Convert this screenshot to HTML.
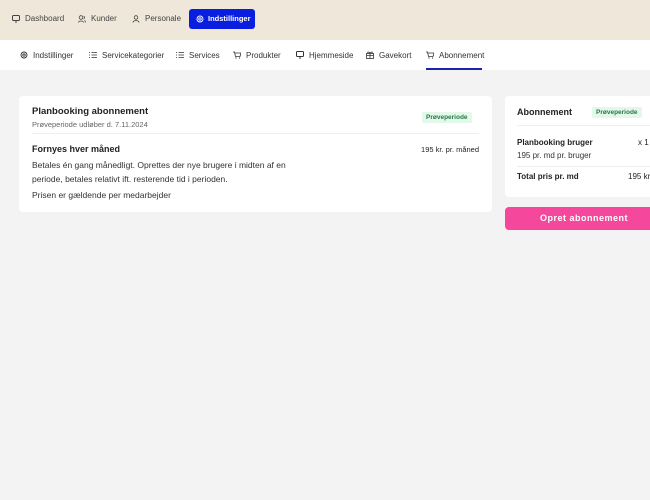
<!DOCTYPE html>
<html><head><style>
*{box-sizing:border-box;margin:0;padding:0}
body{width:650px;height:500px;overflow:hidden;background:#f3f3f3;font-family:"Liberation Sans",sans-serif;color:#222;position:relative}
.top{position:absolute;left:0;top:0;width:650px;height:40px;background:#efe8da}
.top .it{position:absolute;top:9px;height:20px;font-size:8px;line-height:20px;color:#444;display:flex;align-items:center;gap:5px}
.top .act{background:#0a1ee0;color:#fff;border-radius:3px;font-weight:bold;font-size:7.5px;gap:4px}
.nav{position:absolute;left:0;top:40px;width:650px;height:30px;background:#fff}
.nav .it{position:absolute;top:0;height:30px;line-height:29px;font-size:8px;color:#333;display:flex;align-items:center;gap:5px}
.ul{position:absolute;left:426px;top:68px;width:56px;height:2px;background:#1a22b0}
.card{position:absolute;background:#fff;border-radius:4px}
.badge{position:absolute;background:#e3f7ea;color:#257a45;font-size:6.5px;font-weight:bold;padding:2px 4px;border-radius:2px}
.t{position:absolute;white-space:nowrap}
svg{display:block;flex-shrink:0}
</style></head><body>
<div class="top">
<div class="it" style="left:12px"><svg width="8" height="8" viewBox="0 0 8 8"><rect x="0.5" y="0.5" width="7" height="5" rx="1" fill="none" stroke="#444"/><path d="M3 7h2" stroke="#444"/></svg>Dashboard</div>
<div class="it" style="left:78px"><svg width="8" height="8" viewBox="0 0 8 8"><circle cx="3" cy="2.5" r="1.8" fill="none" stroke="#444" stroke-width=".8"/><path d="M0.5 7.5c0-2 5-2 5 0M5.5 1a1.6 1.6 0 010 3M6.5 5.5c1 .5 1 1.5 1 2" fill="none" stroke="#444" stroke-width=".8"/></svg>Kunder</div>
<div class="it" style="left:132px"><svg width="8" height="8" viewBox="0 0 8 8"><circle cx="4" cy="2.5" r="1.8" fill="none" stroke="#444" stroke-width=".8"/><path d="M1 7.5c0-2.5 6-2.5 6 0" fill="none" stroke="#444" stroke-width=".8"/></svg>Personale</div>
<div class="it act" style="left:189px;width:66px;padding-left:7px"><svg width="8" height="8" viewBox="0 0 8 8"><circle cx="4" cy="4" r="3" fill="none" stroke="#fff" stroke-width=".9"/><circle cx="4" cy="4" r="1.2" fill="none" stroke="#fff" stroke-width=".9"/></svg>Indstillinger</div>
</div>
<div class="nav">
<div class="it" style="left:20px"><svg width="8" height="8" viewBox="0 0 8 8"><circle cx="4" cy="4" r="3" fill="none" stroke="#333" stroke-width=".9"/><circle cx="4" cy="4" r="1.2" fill="none" stroke="#333" stroke-width=".9"/></svg>Indstillinger</div>
<div class="it" style="left:89px"><svg width="8" height="8" viewBox="0 0 8 8"><path d="M0 1.5h1M2.5 1.5h5.5M0 4h1M2.5 4h5.5M0 6.5h1M2.5 6.5h5.5" stroke="#333" stroke-width=".8"/></svg>Servicekategorier</div>
<div class="it" style="left:176px"><svg width="8" height="8" viewBox="0 0 8 8"><path d="M0 1.5h1M2.5 1.5h5.5M0 4h1M2.5 4h5.5M0 6.5h1M2.5 6.5h5.5" stroke="#333" stroke-width=".8"/></svg>Services</div>
<div class="it" style="left:233px"><svg width="8" height="8" viewBox="0 0 8 8"><path d="M0 1h1.5l1 4.5h4.5l1-3.5H2" fill="none" stroke="#333" stroke-width=".8"/><circle cx="3" cy="7" r=".6" fill="#333"/><circle cx="6.5" cy="7" r=".6" fill="#333"/></svg>Produkter</div>
<div class="it" style="left:296px"><svg width="8" height="8" viewBox="0 0 8 8"><rect x="0.5" y="0.5" width="7" height="5" rx="1" fill="none" stroke="#333"/><path d="M3 7h2" stroke="#333"/></svg>Hjemmeside</div>
<div class="it" style="left:366px"><svg width="8" height="8" viewBox="0 0 8 8"><rect x="0.5" y="2.5" width="7" height="5" fill="none" stroke="#333" stroke-width=".8"/><path d="M4 2.5v5M0.5 4.5h7M4 2.5c-1-2-3-2-2 0M4 2.5c1-2 3-2 2 0" fill="none" stroke="#333" stroke-width=".8"/></svg>Gavekort</div>
<div class="it" style="left:426px"><svg width="8" height="8" viewBox="0 0 8 8"><path d="M0 1h1.5l1 4.5h4.5l1-3.5H2" fill="none" stroke="#333" stroke-width=".8"/><circle cx="3" cy="7" r=".6" fill="#333"/><circle cx="6.5" cy="7" r=".6" fill="#333"/></svg>Abonnement</div>
<div class="ul" style="top:28px"></div>
</div>
<div class="card" style="left:19px;top:96px;width:473px;height:116px">
<div class="t" style="left:13px;top:10px;font-size:9.5px;font-weight:bold;color:#222">Planbooking abonnement</div>
<div class="t" style="left:13px;top:24px;font-size:7.5px;color:#666">Prøveperiode udløber d. 7.11.2024</div>
<div class="badge" style="left:403px;top:16px">Prøveperiode</div>
<div style="position:absolute;left:13px;right:13px;top:37px;height:1px;background:#eee"></div>
<div class="t" style="left:13px;top:48px;font-size:9px;font-weight:bold">Fornyes hver måned</div>
<div class="t" style="right:13px;top:49px;font-size:7.5px">195 kr. pr. måned</div>
<div class="t" style="left:13px;top:63px;font-size:8.5px;line-height:13.5px;color:#333">Betales én gang månedligt. Oprettes der nye brugere i midten af en<br>periode, betales relativt ift. resterende tid i perioden.</div>
<div class="t" style="left:13px;top:94px;font-size:8.5px;color:#333">Prisen er gældende per medarbejder</div>
</div>
<div class="card" style="left:505px;top:96px;width:160px;height:101px">
<div class="t" style="left:12px;top:11px;font-size:9px;font-weight:bold">Abonnement</div>
<div class="badge" style="left:87px;top:11px">Prøveperiode</div>
<div style="position:absolute;left:12px;right:0;top:29px;height:1px;background:#eee"></div>
<div class="t" style="left:12px;top:42px;font-size:8px;font-weight:bold">Planbooking bruger</div>
<div class="t" style="left:133px;top:42px;font-size:8px">x 1</div>
<div class="t" style="left:12px;top:55px;font-size:8px;color:#333">195 pr. md pr. bruger</div>
<div style="position:absolute;left:12px;right:0;top:70px;height:1px;background:#eee"></div>
<div class="t" style="left:12px;top:76px;font-size:8px;font-weight:bold">Total pris pr. md</div>
<div class="t" style="left:123px;top:76px;font-size:8px">195 kr.</div>
</div>
<div style="position:absolute;left:505px;top:207px;width:160px;height:23px;background:#f5479c;border-radius:4px;color:#fff;font-size:9px;font-weight:bold;letter-spacing:.5px;line-height:23px;padding-left:35px">Opret abonnement</div>
</body></html>
